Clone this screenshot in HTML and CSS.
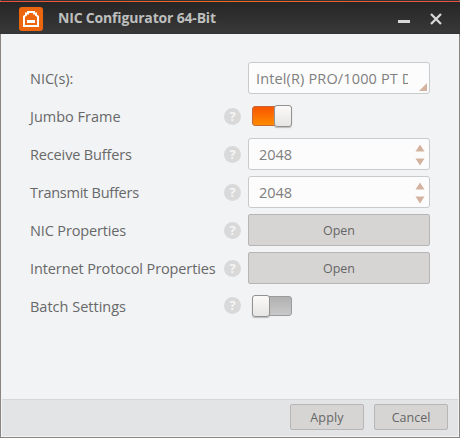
FILE: index.html
```html
<!DOCTYPE html>
<html lang="en">
<head>
<meta charset="utf-8">
<title>NIC Configurator 64-Bit</title>
<link rel="stylesheet" href="styles.css">
</head>
<body>
<div class="window">
  <header class="titlebar">
    <svg class="logo" width="24" height="24" viewBox="0 0 24 24">
      <rect width="24" height="24" rx="3" fill="#ec660f"/>
      <path d="M5 19V9.5L7 8V6.5H9V5H15V6.5H17V8L19 9.5V19Z" fill="none" stroke="#fff" stroke-width="2"/>
      <path d="M8 13h8v3H8z" fill="#fff"/>
    </svg>
    <h1 class="title">NIC Configurator 64-Bit</h1>
    <svg class="minimize" width="12" height="3"><path d="M0 0h12v3H0z" fill="#d8d8d8"/></svg>
    <svg class="close" width="12" height="12"><path d="M1 1L11 11M11 1L1 11" stroke="#d8d8d8" stroke-width="2.3"/></svg>
  </header>
  <main class="settings">
    <div class="row">
      <span class="label nic">NIC(s):</span>
      <div class="field select"><span class="select-text">Intel(R) PRO/1000 PT D</span><i class="corner"></i></div>
    </div>
    <div class="row">
      <span class="label jumbo">Jumbo Frame</span><span class="help">?</span>
      <div class="toggle on"><i class="knob"></i></div>
    </div>
    <div class="row">
      <span class="label receive">Receive Buffers</span><span class="help">?</span>
      <div class="field number"><span>2048</span><svg class="spin" width="10" height="22"><path d="M5 0.5L9.5 7.5H.5zM.5 14.5H9.5L5 21.5z" fill="#d3b3a0"/></svg></div>
    </div>
    <div class="row">
      <span class="label transmit">Transmit Buffers</span><span class="help">?</span>
      <div class="field number"><span>2048</span><svg class="spin" width="10" height="22"><path d="M5 0.5L9.5 7.5H.5zM.5 14.5H9.5L5 21.5z" fill="#d3b3a0"/></svg></div>
    </div>
    <div class="row">
      <span class="label properties">NIC Properties</span><span class="help">?</span>
      <button class="button open">Open</button>
    </div>
    <div class="row">
      <span class="label protocol">Internet Protocol Properties</span><span class="help">?</span>
      <button class="button open">Open</button>
    </div>
    <div class="row">
      <span class="label batch">Batch Settings</span><span class="help raised">?</span>
      <div class="toggle"><i class="knob"></i></div>
    </div>
  </main>
  <footer class="footer">
    <button class="button apply">Apply</button>
    <button class="button cancel">Cancel</button>
  </footer>
</div>
</body>
</html>
```
FILE: styles.css
```css
* { box-sizing: border-box; }
body {
  margin: 0;
  font-family: "Open Sans", "Noto Sans", sans-serif;
  color: #686868;
}
.window {
  width: 460px;
  height: 438px;
  display: flex;
  flex-direction: column;
  background: #f1f3f5;
  border: 1px solid #8b8581;
  border-top: 1px solid #303436;
}
.titlebar {
  height: 33px;
  margin: 0 -1px;
  padding: 0 18px 0 19px;
  display: flex;
  align-items: center;
  flex: none;
  border-top: 1px solid;
  border-image: linear-gradient(90deg, #e8503f, #f26a1b 50%, #e25443) 1;
  border-width: 1px 0 0;
  background: linear-gradient(#262626, #383838 94%, #333137);
}
.logo { margin-top: 1px; }
.title {
  flex: 1;
  margin: 0 0 0 15px;
  font-size: 14px;
  line-height: 20px;
  font-weight: 700;
  letter-spacing: -0.18px;
  color: #bdbfbe;
  white-space: nowrap;
}
.minimize { margin: 7px 20px 0 0; }
.close { margin-top: 1px; }
.settings {
  flex: 1;
  padding: 28px 29px 0;
  display: flex;
  flex-direction: column;
  gap: 6px;
}
.row { height: 32px; display: flex; align-items: center; }
.label {
  width: 194px;
  flex: none;
  padding-top: 2px;
  white-space: nowrap;
  font-size: 14.5px;
  line-height: 20px;
}
.receive, .properties { letter-spacing: -0.14px; }
.transmit { letter-spacing: -0.25px; }
.protocol { letter-spacing: -0.11px; }
.help {
  width: 17px;
  height: 17px;
  flex: none;
  border-radius: 50%;
  background: #d9d9d9;
  color: #f5f5f5;
  font-size: 13px;
  font-weight: 700;
  line-height: 17px;
  text-align: center;
}
.raised { margin-top: -1px; }
.field {
  width: 182px;
  height: 32px;
  margin-left: auto;
  display: flex;
  align-items: center;
  border: 1px solid #c9cacc;
  border-radius: 3px;
  background: #fcfcfc;
  color: #808080;
  font-size: 14.5px;
  line-height: 20px;
}
.select { position: relative; padding-left: 7px; }
.select-text {
  width: 152px;
  padding-top: 2px;
  overflow: hidden;
  white-space: nowrap;
  letter-spacing: 0.14px;
}
.corner {
  position: absolute;
  right: 2px;
  bottom: 2px;
  width: 8px;
  height: 8px;
  background: #d3b3a0;
  clip-path: polygon(100% 0, 100% 100%, 0 100%);
}
.number { padding: 0 4px 0 10px; justify-content: space-between; }
.number span { padding-top: 2px; }
.spin { margin-top: 2px; }
.toggle {
  width: 40px;
  height: 20px;
  margin-left: 11px;
  display: flex;
  align-items: center;
  border: 1px solid #999b9e;
  border-radius: 3px;
  background: linear-gradient(#b1b1b1, #c9c9c9);
}
.toggle.on {
  justify-content: flex-end;
  border-color: #c86837;
  background: linear-gradient(#f95500, #ff8b00);
}
.knob {
  width: 18px;
  height: 22px;
  flex: none;
  margin: 0 -1px;
  border: 1px solid #929292;
  border-radius: 3px;
  background: linear-gradient(#fbfaf9, #e6e5e3);
  box-shadow: 0 1px 1px #bbb;
}
.button {
  padding: 2px 0 0;
  border: 1px solid #b7b5b6;
  border-radius: 2px;
  background: #d6d5d3;
  color: #666;
  font-family: inherit;
  font-size: 12.5px;
  line-height: 18px;
}
.open { width: 182px; height: 32px; margin-left: auto; }
.footer {
  height: 38px;
  margin: 0 1px;
  padding: 4px 10px 0;
  display: flex;
  justify-content: flex-end;
  gap: 10px;
  border-top: 1px solid #d5d7d9;
  border-bottom: 1px solid #f4f4f4;
  background: #e3e4e6;
}
.apply, .cancel { width: 74px; height: 26px; }
.apply { letter-spacing: 0.2px; }
```
